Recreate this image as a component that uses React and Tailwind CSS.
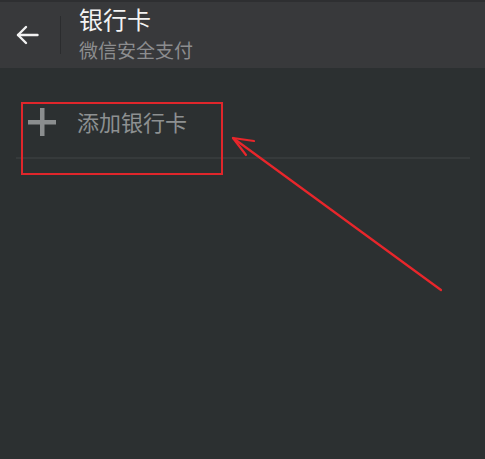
export default function App() {
  return (
    <div
      className="relative w-[485px] h-[459px] overflow-hidden bg-[#2c3031]"
      style={{ fontFamily: '"Noto Sans CJK SC", "Noto Sans", sans-serif' }}
    >
      <header className="flex items-center h-[68px] bg-[#38393b] border-t-2 border-[#2e2f31]">
        <div className="w-[60px] flex justify-start pl-[16px]">
          <svg width="23" height="20" viewBox="0 0 23 20" fill="none" stroke="#f2f2f2" strokeWidth="2.4" strokeLinecap="round" strokeLinejoin="round">
            <path d="M21.5 10H2" />
            <path d="M10 2L2 10L10 18" />
          </svg>
        </div>
        <div className="w-px h-[38px] bg-[#2b2c2e]" />
        <div className="ml-[18px] flex flex-col">
          <span className="text-[24px] leading-[24px] text-[#f3f3f3] mt-[-4px]">银行卡</span>
          <span className="text-[19px] leading-[20px] text-[#8c8d8f] mt-[9px]">微信安全支付</span>
        </div>
      </header>

      <div className="px-[16px] pr-[15px] pt-[40px]">
        <div className="flex items-center h-[28px] pl-[12px]">
          <svg width="28" height="28" viewBox="0 0 28 28" fill="#8b8e8f">
            <rect x="12" y="0" width="4.5" height="28" />
            <rect x="0" y="12" width="28" height="4.5" />
          </svg>
          <span className="ml-[21px] text-[22px] leading-[22px] text-[#8d9091] mt-[-2px]">添加银行卡</span>
        </div>
        <div className="mt-[21px] h-[2px] bg-[#363a3b]" />
      </div>

      <div className="absolute left-[21px] top-[102px] w-[202px] h-[73px] border-[2px] border-[#e0262b]" />

      <svg className="absolute left-0 top-0" width="485" height="459" fill="none" stroke="#e8262b" strokeWidth="2.2" strokeLinecap="round" strokeLinejoin="round">
        <path d="M441 290L233 138" />
        <path d="M254 141L233 138L246 155" />
      </svg>
    </div>
  );
}
